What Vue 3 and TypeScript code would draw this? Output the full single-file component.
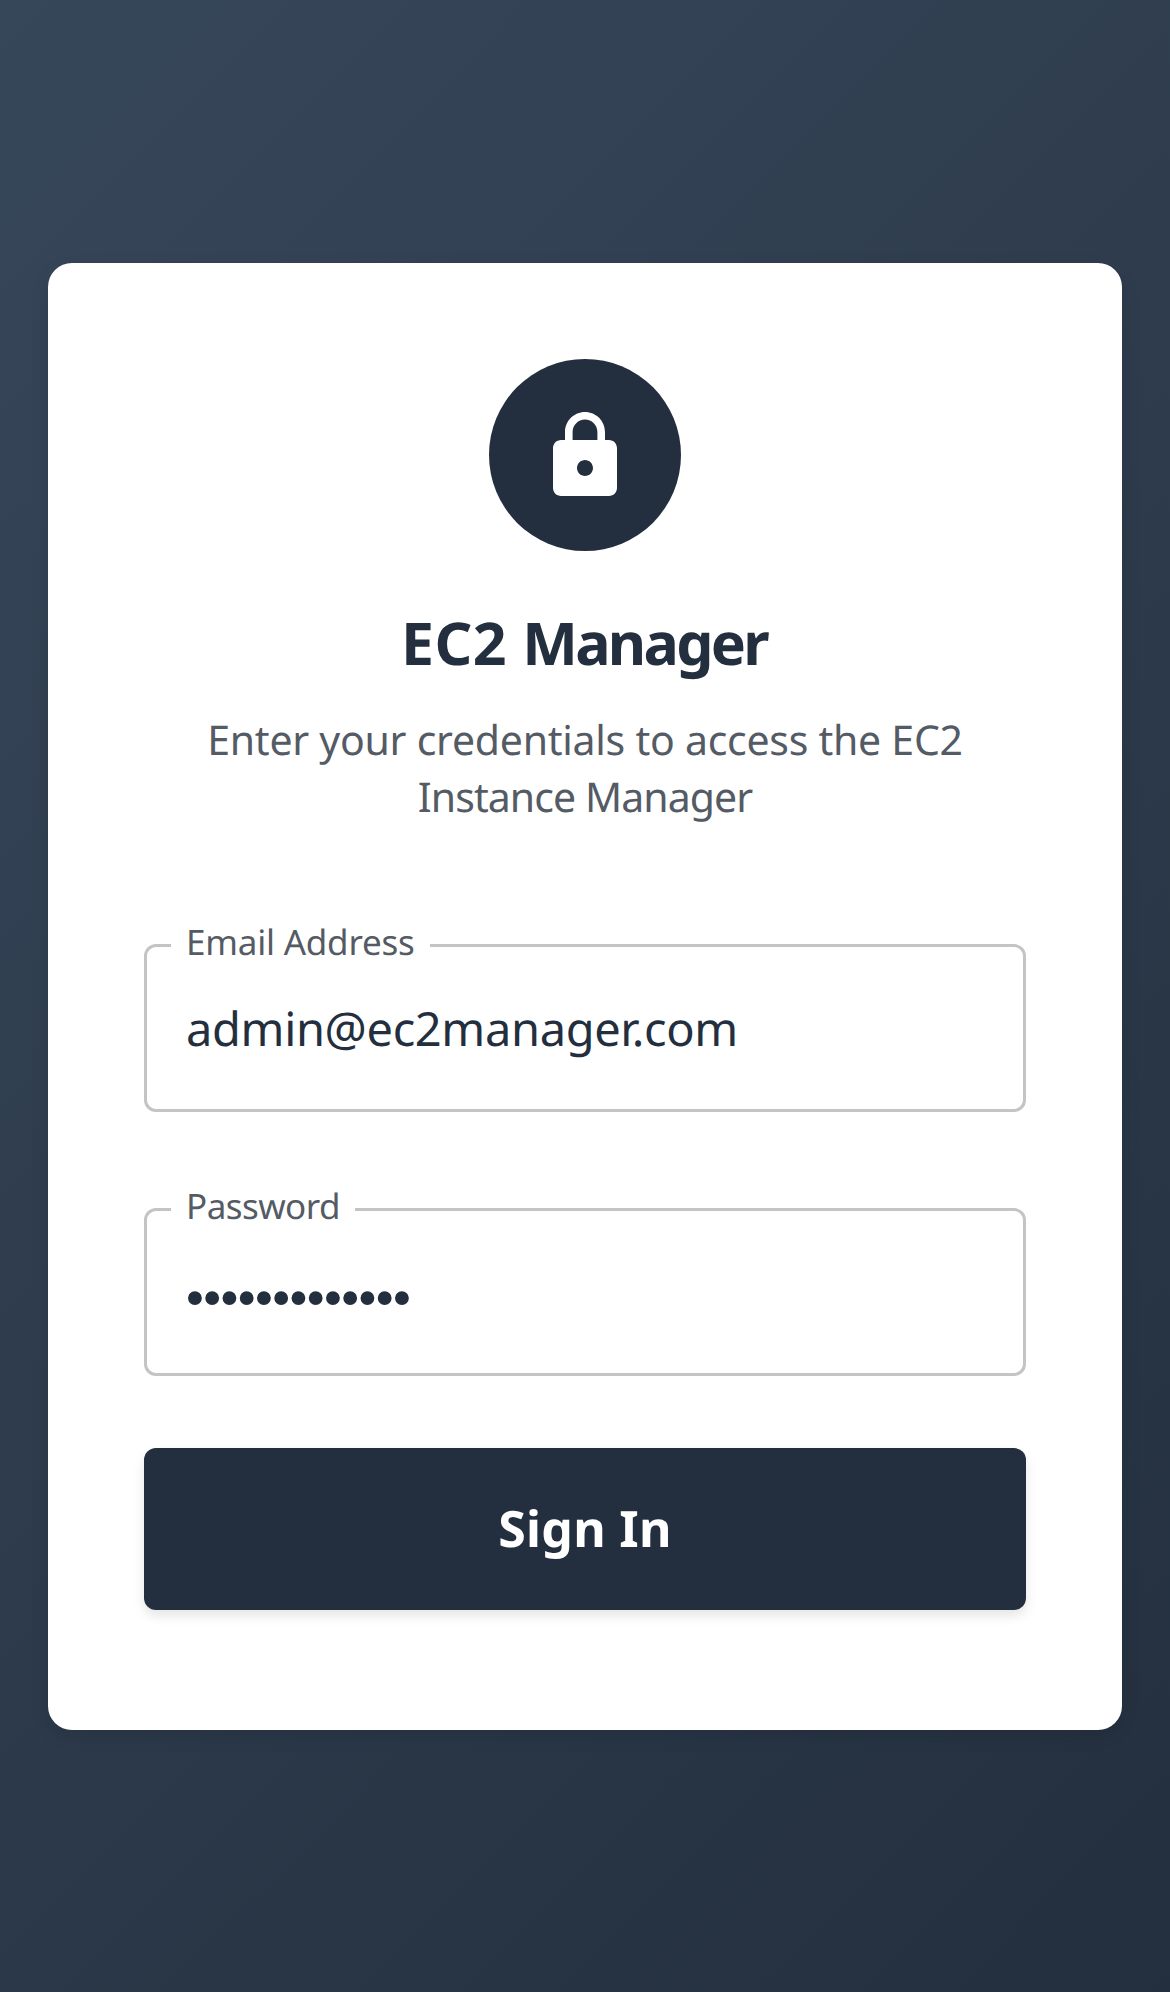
<script setup lang="ts">
import { ref } from 'vue'

const email = ref('admin@ec2manager.com')
const password = ref('manager-admin')
</script>

<template>
  <main class="page">
    <form class="card" @submit.prevent>
      <div class="badge">
        <svg class="lock" viewBox="0 0 24 24" aria-hidden="true">
          <path d="M18 8h-1V6c0-2.760-2.240-5-5-5S7 3.240 7 6v2H6c-1.100 0-2 .9-2 2v10c0 1.100.9 2 2 2h12c1.100 0 2-.9 2-2V10c0-1.100-.9-2-2-2m-6 9c-1.100 0-2-.9-2-2s.9-2 2-2 2 .9 2 2-.9 2-2 2m3.100-9H8.900V6c0-1.710 1.390-3.100 3.100-3.100s3.100 1.390 3.100 3.100z" />
        </svg>
      </div>
      <h1 class="title"><span class="title-mark">EC2</span> <span class="title-name">Manager</span></h1>
      <p class="subtitle"><span class="line-a">Enter your credentials to access the EC2</span> <span class="line-b">Instance Manager</span></p>
      <fieldset class="field">
        <legend class="legend legend-email"><span class="label">Email Address</span></legend>
        <input v-model="email" class="input" type="text" aria-label="Email Address" />
      </fieldset>
      <fieldset class="field">
        <legend class="legend legend-password"><span class="label">Password</span></legend>
        <input v-model="password" class="input secret" type="password" aria-label="Password" />
      </fieldset>
      <button class="submit" type="submit">Sign In</button>
    </form>
  </main>
</template>

<style>
body {
  margin: 0;
}
</style>

<style scoped>
.page {
  box-sizing: border-box;
  min-height: 1992px;
  padding: 263px 48px 0;
  background: linear-gradient(135deg, #37475a 0%, #232f3e 100%);
  font-family: "Noto Sans", "Open Sans", sans-serif;
  color: #232f3e;
  text-rendering: geometricPrecision;
}

.card {
  box-sizing: border-box;
  display: flex;
  flex-direction: column;
  padding: 96px 96px 120px;
  border-radius: 24px;
  background: #fff;
  box-shadow: 0 6px 18px rgba(0, 0, 0, 0.1);
}

.badge {
  width: 192px;
  height: 192px;
  margin: 0 auto;
  border-radius: 50%;
  background: #232f3e;
  display: flex;
  align-items: center;
  justify-content: center;
}

.lock {
  width: 96px;
  height: 96px;
  margin-top: 2px;
  fill: #fff;
}

.title {
  margin: 52px 0 28px;
  font-size: 59px;
  font-weight: 700;
  line-height: 80px;
  text-align: center;
  white-space: nowrap;
}

.title-mark {
  letter-spacing: 0.4px;
}

.title-name {
  letter-spacing: -2.7px;
  margin-right: 2px;
}

.subtitle {
  margin: 0 0 118px;
  padding-top: 1px;
  font-size: 41px;
  line-height: 57px;
  text-align: center;
  color: #545b64;
}

.line-a,
.line-b {
  display: block;
  white-space: nowrap;
}

.line-a {
  letter-spacing: -0.26px;
}

.line-b {
  letter-spacing: -0.93px;
}

.field {
  box-sizing: border-box;
  min-width: 0;
  height: 168px;
  margin: 0 0 96px;
  padding: 0;
  border: 3px solid #c4c4c4;
  border-radius: 12px;
}

.legend {
  box-sizing: border-box;
  height: 3px;
  margin-left: 24px;
  padding: 0 15px;
  font-size: 35px;
  line-height: 3px;
  color: #545b64;
  white-space: nowrap;
}

.legend-email {
  width: 259px;
  letter-spacing: -0.22px;
}

.legend-password {
  width: 184px;
  letter-spacing: -0.55px;
}

.label {
  position: relative;
  top: -3px;
}

.input {
  display: block;
  box-sizing: border-box;
  width: 100%;
  height: 162px;
  padding: 0 39px;
  border: 0;
  outline: 0;
  background: transparent;
  font: inherit;
  font-size: 47px;
  letter-spacing: -0.36px;
  color: #232f3e;
  text-rendering: geometricPrecision;
}

.secret {
  padding: 10px 39px 0;
  font-family: "Liberation Sans", sans-serif;
  font-size: 51px;
  letter-spacing: -0.6px;
}

.submit {
  height: 162px;
  margin-top: -24px;
  padding: 0 0 2px;
  border: 0;
  border-radius: 12px;
  background: #232f3e;
  box-shadow: 0 6px 12px rgba(0, 0, 0, 0.1);
  font: inherit;
  font-size: 50px;
  font-weight: 700;
  letter-spacing: 0.3px;
  color: #fff;
  text-rendering: geometricPrecision;
}
</style>
